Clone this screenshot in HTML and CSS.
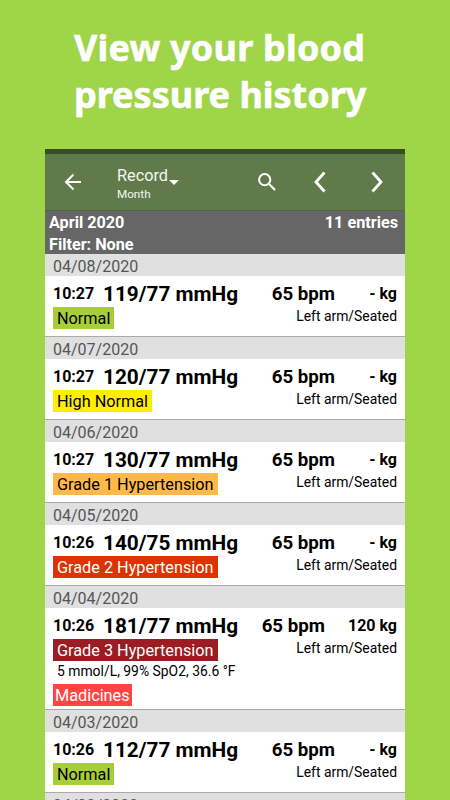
FILE: index.html
```
<!DOCTYPE html>
<html lang="en">
<head>
    <meta charset="UTF-8">
    <meta name="viewport" content="width=device-width, initial-scale=1.0">
    <title>Blood pressure history</title>
    <link rel="stylesheet" href="styles.css">
</head>
<body>
    <h1><span class="line-one">View your blood</span><br><span class="line-two">pressure history</span></h1>
    <div class="phone">
        <div class="status-bar"></div>
        <header class="toolbar">
            <svg class="back" width="18" height="18" viewBox="0 0 18 18"><path d="M17 9H2M9.5 1.5L2 9L9.5 16.5"/></svg>
            <div class="title">
                <div class="title-main">Record<span class="caret"></span></div>
                <div class="title-sub">Month</div>
            </div>
            <svg class="search" width="20" height="20" viewBox="0 0 20 20"><circle cx="7.7" cy="7.7" r="5.6"/><path d="M11.8 11.8L18 18"/></svg>
            <svg class="prev" width="14" height="22" viewBox="0 0 14 22"><path d="M11.5 1.5L3 11L11.5 20.5"/></svg>
            <svg class="next" width="14" height="22" viewBox="0 0 14 22"><path d="M2.5 1.5L11 11L2.5 20.5"/></svg>
        </header>
        <div class="summary">
            <div class="summary-row"><span>April 2020</span><span>11 entries</span></div>
            <div class="summary-row"><span>Filter: None</span></div>
        </div>

        <section class="entry">
            <div class="date">04/08/2020</div>
            <div class="values"><span class="time">10:27</span><span class="pressure">119/77 mmHg</span><span class="pulse">65 bpm</span><span class="weight">- kg</span></div>
            <div class="details"><span class="tag normal">Normal</span><span class="position">Left arm/Seated</span></div>
        </section>
        <section class="entry">
            <div class="date">04/07/2020</div>
            <div class="values"><span class="time">10:27</span><span class="pressure">120/77 mmHg</span><span class="pulse">65 bpm</span><span class="weight">- kg</span></div>
            <div class="details"><span class="tag high">High Normal</span><span class="position">Left arm/Seated</span></div>
        </section>
        <section class="entry">
            <div class="date">04/06/2020</div>
            <div class="values"><span class="time">10:27</span><span class="pressure">130/77 mmHg</span><span class="pulse">65 bpm</span><span class="weight">- kg</span></div>
            <div class="details"><span class="tag grade1">Grade 1 Hypertension</span><span class="position">Left arm/Seated</span></div>
        </section>
        <section class="entry">
            <div class="date">04/05/2020</div>
            <div class="values"><span class="time">10:26</span><span class="pressure">140/75 mmHg</span><span class="pulse">65 bpm</span><span class="weight">- kg</span></div>
            <div class="details"><span class="tag grade2">Grade 2 Hypertension</span><span class="position">Left arm/Seated</span></div>
        </section>
        <section class="entry tall">
            <div class="date">04/04/2020</div>
            <div class="values"><span class="time">10:26</span><span class="pressure">181/77 mmHg</span><span class="pulse">65 bpm</span><span class="weight">120 kg</span></div>
            <div class="details"><span class="tag grade3">Grade 3 Hypertension</span><span class="position">Left arm/Seated</span></div>
            <div class="extra">5 mmol/L, 99% SpO2, 36.6 °F</div>
            <span class="tag medicine">Madicines</span>
        </section>
        <section class="entry">
            <div class="date">04/03/2020</div>
            <div class="values"><span class="time">10:26</span><span class="pressure">112/77 mmHg</span><span class="pulse">65 bpm</span><span class="weight">- kg</span></div>
            <div class="details"><span class="tag normal">Normal</span><span class="position">Left arm/Seated</span></div>
        </section>
        <section class="entry">
            <div class="date">04/02/2020</div>
        </section>
    </div>
</body>
</html>
```

FILE: styles.css
```
body {
    margin: 0;
    height: 800px;
    overflow: hidden;
    background-color: #9fd548;
    font-family: Roboto, "Liberation Sans", sans-serif;
    color: #000;
}

h1 {
    box-sizing: border-box;
    height: 149px;
    margin: 0;
    padding: 24px 0 0 74px;
    font: bold 36px/47px "Noto Sans", "Open Sans", sans-serif;
    color: #fff;
    white-space: nowrap;
    -webkit-text-stroke: 0.6px #fff;
}

.line-one {
    letter-spacing: 0.2px;
}

.phone {
    width: 360px;
    height: 651px;
    margin: 0 auto;
    overflow: hidden;
    background-color: #fff;
}

.status-bar {
    height: 5px;
    background-color: #34501f;
}

.toolbar {
    display: flex;
    align-items: center;
    box-sizing: border-box;
    height: 57px;
    padding-left: 19px;
    background-color: #617a49;
    border-bottom: 1px solid #566348;
    color: #f4f6f2;
}

.toolbar svg {
    flex: none;
    fill: none;
    stroke: #fff;
    stroke-width: 2;
}

.toolbar .prev,
.toolbar .next {
    stroke-width: 2.8;
}

.title {
    width: 140px;
    margin-left: 35px;
    padding-top: 4px;
}

.title-main {
    display: flex;
    align-items: center;
    font-size: 16.3px;
    line-height: 20px;
}

.caret {
    height: 0;
    margin: 13px 0 0 1px;
    border: 5px solid transparent;
    border-top-color: #fff;
    border-bottom: 0;
}

.title-sub {
    font-size: 11.7px;
    line-height: 16px;
}

.prev {
    margin-left: 36px;
}

.next {
    margin-left: 43px;
}

.summary {
    box-sizing: border-box;
    height: 43px;
    padding: 1px 7px 0 4px;
    background-color: #666;
    color: #fff;
    font-size: 16.2px;
    font-weight: bold;
    line-height: 22px;
}

.summary-row {
    display: flex;
    justify-content: space-between;
}

.entry {
    box-sizing: border-box;
    height: 83px;
    padding: 0 8px;
    border-bottom: 1px solid #aaa;
}

.entry.tall {
    height: 124px;
}

.date {
    height: 22px;
    margin: 0 -8px;
    padding-left: 8px;
    background-color: #e0e0e0;
    color: #555;
    font-size: 16px;
    line-height: 25px;
}

.values {
    display: flex;
    height: 31px;
    font-weight: bold;
    line-height: 36px;
    white-space: nowrap;
}

.time,
.weight {
    font-size: 16px;
}

.time {
    width: 50px;
}

.pressure {
    font-size: 20.8px;
}

.pulse {
    margin-left: auto;
    font-size: 18.7px;
}

.weight {
    min-width: 39px;
    margin-left: 23px;
    text-align: right;
}

.details {
    display: flex;
    justify-content: space-between;
}

.tag {
    display: inline-block;
    height: 22px;
    padding: 0 4px;
    font-size: 16.25px;
    line-height: 23px;
}

.normal { background-color: #a6ce39; }
.high { background-color: #ffee00; }
.grade1 { background-color: #ffb94a; }
.grade2 { background-color: #dd3300; color: #fff; }
.grade3 { background-color: #9b1c22; color: #fff; }

.medicine {
    padding: 0 2px;
    background-color: #ff4444;
    color: #fff;
}

.position {
    font-size: 13.9px;
    line-height: 19px;
}

.extra {
    height: 23px;
    padding-left: 4px;
    font-size: 13.9px;
    line-height: 20px;
}
```
